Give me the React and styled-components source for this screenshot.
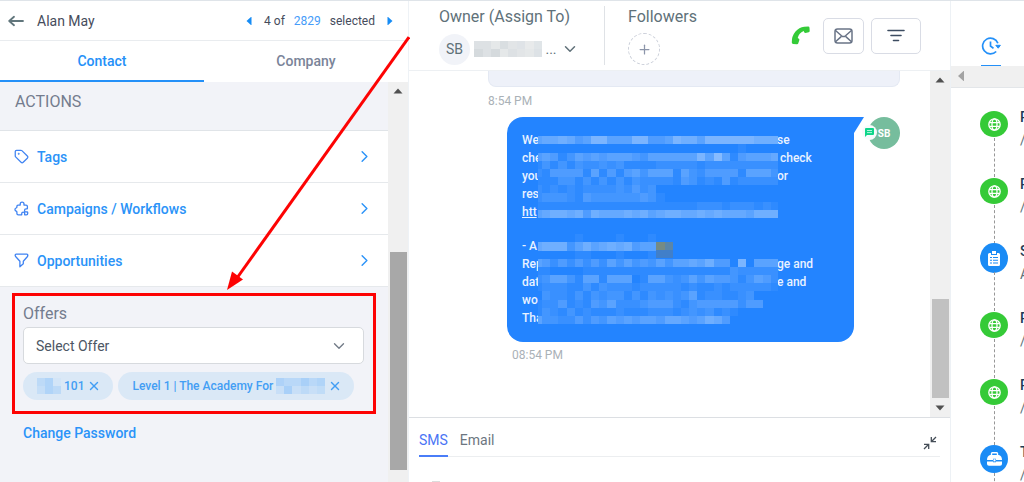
import React, { useState } from "react";
import styled, { createGlobalStyle } from "styled-components";
import { ChevronDown, ChevronRight, Plus, Tag, X } from "lucide-react";

const GlobalStyle = createGlobalStyle`
  * {
    box-sizing: border-box;
  }

  body {
    margin: 0;
    background: #fff;
    font-family: Roboto, "Liberation Sans", sans-serif;
    font-size: 14px;
    color: #607179;
  }

  button, select, input {
    font: inherit;
    color: inherit;
  }

  button {
    padding: 0;
    border: 0;
    background: none;
    cursor: pointer;
  }

  a {
    text-decoration: none;
  }

  svg {
    display: block;
    flex: none;
  }
`;

const Page = styled.div`
  display: grid;
  grid-template-columns: 409px minmax(0, 1fr) 74px;
  height: 100vh;
  overflow: hidden;
  border-top: 1px solid #dfe4e9;
`;

const Sidebar = styled.aside`
  position: relative;
  z-index: 1;
  display: flex;
  flex-direction: column;
  min-height: 0;
  border-right: 1px solid #eef2f6;
`;

const RecordBar = styled.header`
  display: flex;
  align-items: center;
  flex: none;
  height: 40px;
  padding: 0 13px 0 8px;
  border-bottom: 1px solid #e9ecef;
  color: #464c5c;
`;

const RecordName = styled.span`
  flex: 1;
  padding-left: 13px;
`;

const Pager = styled.div`
  display: flex;
  align-items: center;
  font-size: 12px;

  a {
    margin: 0 9px;
    color: #469cf9;
  }

  span:first-of-type {
    margin-left: 10px;
  }

  button:last-child {
    margin-left: 10px;
  }
`;

const TabBar = styled.nav`
  display: flex;
  flex: none;
  height: 41px;
`;

const TabButton = styled.button`
  flex: 1;
  font-weight: 500;
  color: ${(p) => (p.$active ? "#2490f8" : "#7a8499")};
  border-bottom: 2px solid ${(p) => (p.$active ? "#2490f8" : "#fff")};
`;

const SidebarBody = styled.div`
  display: flex;
  flex: 1;
  min-height: 0;
`;

const SidebarContent = styled.div`
  flex: 1;
  background: #f2f3f8;
  overflow: hidden;
`;

const SectionTitle = styled.h2`
  height: 49px;
  margin: 0;
  padding: 10px 15px;
  border-bottom: 1px solid #e0e4e8;
  font-size: 16px;
  font-weight: 400;
  line-height: 20px;
  color: #747c8e;
`;

const ActionRow = styled.button`
  display: flex;
  align-items: center;
  gap: 8px;
  width: 100%;
  height: 52px;
  padding: 0 14px;
  background: #fff;
  border-bottom: 1px solid #e6e9ec;
  font-weight: 500;
  text-align: left;
  color: #2b93f8;

  span {
    flex: 1;
  }
`;

const OfferBox = styled.section`
  margin: 6px 12px 0;
  padding: 7px 9px 11px 8px;
  border: 3px solid #fd0303;
`;

const OfferLabel = styled.label`
  display: block;
  height: 24px;
  font-size: 16px;
  line-height: 22px;
  color: #747c8e;
`;

const SelectWrap = styled.div`
  display: grid;
  align-items: center;

  select,
  svg {
    grid-area: 1 / 1;
  }

  svg {
    justify-self: end;
    margin-right: 16px;
    pointer-events: none;
  }
`;

const OfferSelect = styled.select`
  appearance: none;
  width: 100%;
  height: 37px;
  padding: 0 12px;
  border: 1px solid #d7dade;
  border-radius: 5px;
  background: #fff;
  color: #4c5664;
`;

const Chips = styled.div`
  display: flex;
  gap: 5px;
  margin-top: 8px;
`;

const Chip = styled.div`
  display: flex;
  align-items: center;
  gap: 3px;
  height: 28px;
  padding: 0 12px 0 14px;
  border-radius: 14px;
  background: #dae8f6;
  font-size: 12px;
  font-weight: 500;
  color: #439ef4;
`;

const PasswordLink = styled.a`
  display: inline-block;
  margin: 11px 23px;
  font-weight: 500;
  color: #2b93f8;
`;

const ScrollTrack = styled.div`
  display: flex;
  flex-direction: column;
  align-items: center;
  justify-content: space-between;
  flex: none;
  width: 20px;
  padding: 5px 0 ${(p) => p.$bottom}px;
  background: #f0f0f0;
`;

const ScrollThumb = styled.div`
  width: 17px;
  height: ${(p) => p.$size}px;
  margin-top: auto;
  margin-bottom: ${(p) => p.$gap || 0}px;
  background: ${(p) => p.$color};
`;

const ArrowOverlay = styled.svg`
  position: absolute;
  top: 0;
  left: 0;
  pointer-events: none;
`;

const Conversation = styled.main`
  display: flex;
  flex-direction: column;
  min-width: 0;
  min-height: 0;
`;

const ConversationBar = styled.header`
  display: flex;
  flex: none;
  height: 70px;
  padding: 5px 29px 5px 30px;
  border-bottom: 1px solid #edf0f3;
`;

const Owner = styled.div`
  width: 166px;
  border-right: 1px solid #dfe2e6;
`;

const Followers = styled.div`
  flex: 1;
  padding-left: 23px;
`;

const FieldTitle = styled.div`
  height: 22px;
  font-size: 16px;
  line-height: 22px;
  white-space: nowrap;
`;

const OwnerPicker = styled.button`
  display: flex;
  align-items: center;
  height: 32px;
  margin-top: 5px;

  svg:last-child {
    margin-left: 4px;
  }
`;

const Initials = styled.span`
  display: grid;
  place-items: center;
  width: 31px;
  height: 31px;
  margin-right: 4px;
  border-radius: 50%;
  background: #f1f3f8;
`;

const AddFollower = styled.button`
  display: grid;
  place-items: center;
  width: 32px;
  height: 32px;
  margin-top: 5px;
  border: 1px dashed #ccd0da;
  border-radius: 50%;
  color: #8c95aa;
`;

const Toolbar = styled.div`
  display: flex;
  align-items: center;
  gap: 7px;
`;

const CallButton = styled.button`
  margin-right: 6px;
`;

const ToolButton = styled.button`
  display: grid;
  place-items: center;
  width: ${(p) => p.$width}px;
  height: 36px;
  border: 1px solid #d9dce5;
  border-radius: 5px;
  background: #fff;
`;

const ThreadArea = styled.div`
  display: flex;
  flex: 1;
  min-height: 0;
`;

const Thread = styled.div`
  flex: 1;
  padding: 0 30px 0 79px;
  overflow: hidden;
`;

const EarlierBubble = styled.div`
  height: 16px;
  margin-bottom: 6px;
  border: 1px solid #e4e9f3;
  border-top: 0;
  border-radius: 0 0 8px 8px;
  background: #eef1f9;
`;

const Stamp = styled.div`
  padding-left: ${(p) => p.$indent || 0}px;
  font-size: 12px;
  line-height: 16px;
  color: #aab1b7;
`;

const MessageRow = styled.div`
  display: flex;
  justify-content: flex-end;
  margin: 8px 0 5px;
`;

const Bubble = styled.div`
  position: relative;
  flex: none;
  width: 347px;
  height: 225px;
  padding: 14px 15px;
  border-radius: 16px 0 16px 16px;
  background: #2384ff;
  color: #e9f2ff;
  font-size: 12px;
  font-weight: 500;
`;

const BubbleTail = styled.svg`
  margin-right: 4px;
`;

const Paragraph = styled.p`
  margin: 0 0 16px;
`;

const Line = styled.span`
  display: flex;
  height: 18px;
  line-height: 18px;
  white-space: pre;
`;

const LineStart = styled.span`
  width: 15px;
  margin-right: 240px;
  text-decoration: ${(p) => (p.$link ? "underline" : "none")};
`;

const TextMask = styled.svg`
  position: absolute;
  top: 11px;
  left: 31px;
`;

const Sender = styled.div`
  position: relative;
  display: grid;
  place-items: center;
  width: 32px;
  height: 32px;
  border-radius: 50%;
  background: #76bd9d;
  color: #fff;
  font-size: 10px;
  font-weight: 700;
`;

const SenderBadge = styled.span`
  position: absolute;
  top: 8px;
  left: -6px;
  display: grid;
  place-items: center;
  width: 15px;
  height: 15px;
  border-radius: 50%;
  background: #f8fafc;
`;

const Composer = styled.footer`
  flex: none;
  height: 65px;
  padding: 5px 10px 0;
  border-top: 1px solid #dcdfe3;
  overflow: hidden;
`;

const ComposerTabs = styled.div`
  display: flex;
  align-items: flex-start;
  gap: 12px;
  height: 34px;
  border-bottom: 1px solid #eceef0;

  svg {
    margin: 13px 3px 0 auto;
  }
`;

const ComposerTab = styled.button`
  height: 34px;
  padding-top: 2px;
  border-bottom: 2px solid ${(p) => (p.$active ? "#4a7df8" : "transparent")};
  color: ${(p) => (p.$active ? "#4a74f5" : "#6c7680")};
`;

const ComposerField = styled.div`
  width: 8px;
  height: 8px;
  margin: 24px 13px 0;
  background: #dcdcdc;
`;

const Activity = styled.aside`
  display: flex;
  flex-direction: column;
  min-height: 0;
  border-left: 1px solid #edf1f5;
  overflow: hidden;
`;

const ActivityTabs = styled.div`
  display: flex;
  align-items: flex-end;
  flex: none;
  height: 65px;
  padding-left: 30px;
`;

const ActivityTab = styled.button`
  width: 20px;
  height: 30px;
  padding-bottom: 10px;
  border-bottom: 1px solid #2490f8;
`;

const HorizontalTrack = styled.div`
  flex: none;
  height: 22px;
  padding: 5px 4px;
  background: #f0f0f0;
  border-bottom: 1px solid #e3e6e9;
`;

const Timeline = styled.ol`
  flex: 1;
  margin: 0;
  padding: 22px 0 0 29px;
  list-style: none;
`;

const Event = styled.li`
  display: grid;
  grid-template-columns: 28px 40px;
  column-gap: 12px;
  height: 67px;
`;

const EventRail = styled.div`
  display: flex;
  flex-direction: column;
  align-items: center;

  &::after {
    content: "";
    flex: 1;
    border-left: 1px dashed #979797;
  }
`;

const EventDot = styled.span`
  display: grid;
  place-items: center;
  width: 28px;
  height: ${(p) => p.$height}px;
  margin: ${(p) => (28 - p.$height) / 2}px 0;
  border-radius: 50%;
  background: ${(p) => p.$color};
`;

const EventText = styled.div`
  line-height: 14px;
  white-space: nowrap;

  strong {
    display: block;
    margin-bottom: 9px;
    font-weight: 500;
    color: #1d3c58;
  }
`;

// One digit per cell: how strongly the cell is lightened.
const maskRows = [
  "000000000000000000000000000000",
  "566764588555884458775888888777",
  "000000000000000000000000010000",
  "454135454555435555558595145556",
  "131313223231111222221222222222",
  "214444151414535551532444415553",
  "111331313131322221431214122222",
  "212121222232423000000000000000",
  "233321433333343100000000000000",
  "111111111111111111112221222121",
  "567767476667675677667676665777",
  "000000000000000000000000000000",
  "000000000000000000000000000000",
  "000001000010001000000000000000",
  "677735756767455000000000000000",
  "000001100010001000000000000000",
  "542424242535343535565744080555",
  "110000111111111111111111322222",
  "235531551555015532353544313542",
  "122211313222122222121121222221",
  "032213132331313232351221123000",
  "122412143522234442134444424400",
  "132131211121112221232312100000",
  "533224243545455466545764000000",
];

const maskCell = 196 / 24;

const PixelMask = () => (
  <TextMask width="240" height="196" shapeRendering="crispEdges">
    <rect width="241" height="196" fill="#2384ff" />
    {maskRows.map((row, y) =>
      row.split("").map((level, x) => (
        <rect
          key={`${x}-${y}`}
          x={x === 0 ? 0 : 4 + (x - 1) * maskCell}
          y={y * maskCell}
          width={x === 0 ? 4 : maskCell}
          height={maskCell}
          fill="#fff"
          opacity={level * 0.05}
        />
      ))
    )}
    <rect x="118" y="114" width="9" height="8" fill="#758b85" />
    <rect x="127" y="114" width="8" height="8" fill="#5b86a8" />
    <rect x="118" y="122" width="17" height="8" fill="#417fc9" />
  </TextMask>
);

const Blocks = ({ colors, width }) => (
  <svg width={width} height="16" shapeRendering="crispEdges">
    {colors.map((row, y) =>
      row.map((color, x) => (
        <rect
          key={`${x}-${y}`}
          x={(x * width) / row.length}
          y={y * 8}
          width={width / row.length}
          height="8"
          fill={color}
        />
      ))
    )}
  </svg>
);

const Triangle = ({ direction, color = "#505050", size = 8 }) => {
  const angle = { up: 0, right: 90, down: 180, left: 270 }[direction];
  return (
    <svg width={size + 2} height={size} viewBox="0 0 10 8">
      <path d="M.5 6.500 5 1.500 9.500 6.500Z" fill={color} transform={`rotate(${angle} 5 4)`} />
    </svg>
  );
};

const PuzzleIcon = () => (
  <svg width="15" height="15" viewBox="0 0 15 15" fill="none" stroke="#3f83f2" strokeWidth="1.3" strokeLinejoin="round">
    <path d="M4 4.2h1.700c.8 0 .5-.6.5-1.200a1.900 1.900 0 0 1 3.800 0c0 .6-.3 1.200.5 1.200h1.600q1.300 0 1.300 1.300v1.800c0 .8-.7.500-1.300.5a1.500 1.500 0 0 0 0 3.200c.6 0 1.600-.4 1.600.5v1q0 1.400-1.300 1.400h-1.200c-.8 0-.5-.6-.5-1.200a1.500 1.500 0 0 0-3 0c0 .6.3 1.200-.5 1.200H4.300q-1.400 0-1.400-1.400v-1.300c0-.8-.2-.8-.8-1a1.700 1.700 0 0 1 0-3.200c.6-.2.800-.2.800-1V5.300Q2.900 4.200 4 4.200Z" />
  </svg>
);

const FunnelIcon = () => (
  <svg width="15" height="15" viewBox="0 0 15 15" fill="none" stroke="#3f83f2" strokeWidth="1.3" strokeLinejoin="round">
    <path d="M2.2 1.2h10.600q1.200 0 1 1.300l-.3 1-4.200 4.800v2.500l-3.400 3V8.300L1.600 3.500 1.200 2.500Q1 1.200 2.200 1.200Z" />
  </svg>
);

const BackIcon = () => (
  <svg width="16" height="12" viewBox="0 0 16 12" fill="none" stroke="#61767c" strokeWidth="1.8" strokeLinecap="round" strokeLinejoin="round">
    <path d="M15 6H1.500M6 1.800 1.200 6 6 10.200" />
  </svg>
);

const PhoneIcon = () => (
  <svg width="19" height="19" viewBox="0 0 19 19">
    <path
      d="M13.2.8 17.2.5q1.200 0 1.300 1.200l.2 3.300q0 1-1 1.200l-3.200.8q-1 0-1.300-.8l-.5-1.200Q7.800 7.200 6.700 12l1.200.8q.7.500.4 1.400l-1.100 3.300q-.4 1-1.400.8l-3.700-.4q-1.200-.2-1.300-1.400Q.5 10.300 4.500 5.500 8 1.500 13.200.8Z"
      fill="#34cb38"
    />
  </svg>
);

const MailIcon = () => (
  <svg width="19" height="16" viewBox="0 0 19 16" fill="none" stroke="#697487" strokeWidth="1.5" strokeLinejoin="round">
    <rect x="1" y="1" width="17" height="14" rx="2.5" />
    <path d="m1.500 2.500 6 5.300q2 1.600 4 0l6-5.300M1.500 13.800l5.700-5.200M17.500 13.800l-5.700-5.200" />
  </svg>
);

const FilterLinesIcon = () => (
  <svg width="18" height="13" viewBox="0 0 18 13" stroke="#3c4c61" strokeWidth="1.6" strokeLinecap="round">
    <path d="M1 1.500h16M4 6.500h10M6.500 11.500h5" />
  </svg>
);

const HistoryIcon = () => (
  <svg width="20" height="18" viewBox="0 0 20 18" fill="none" stroke="#2490f8" strokeWidth="1.7">
    <path d="M16.900 6.200A7.900 7.900 0 1 0 15.200 14.500M9.500 4.500V9l3 2.400" />
    <path d="M14.800 8.300h4.600L17.200 11.200Z" fill="#2490f8" strokeLinejoin="round" strokeWidth="1" />
  </svg>
);

const MessageIcon = () => (
  <svg width="9" height="9" viewBox="0 0 9 9">
    <path d="M1 0h7q1 0 1 1v5q0 1-1 1H2L0 9V1q0-1 1-1Z" fill="#0fd58a" />
    <path d="M2 2.500h5M2 4.600h5" stroke="#d8fff0" strokeWidth=".8" />
  </svg>
);

const CollapseIcon = () => (
  <svg width="14" height="14" viewBox="0 0 14 14" fill="none" stroke="#454e58" strokeWidth="1.3">
    <path d="M8.300 1v4.700H13M8.300 5.700 13 1M1 8.300h4.700V13M5.700 8.300 1 13" />
  </svg>
);

const GlobeIcon = () => (
  <svg width="13" height="13" viewBox="0 0 13 13" fill="none" stroke="#fff" strokeWidth="1.3">
    <circle cx="6.5" cy="6.5" r="5.7" />
    <ellipse cx="6.5" cy="6.5" rx="2.5" ry="5.7" />
    <path d="M1.200 4.600h10.600M1.200 8.400h10.600" />
  </svg>
);

const ClipboardIcon = () => (
  <svg width="12" height="15" viewBox="0 0 12 15">
    <path d="M1.500 2H3v2h6V2h1.500Q12 2 12 3.500v10q0 1.500-1.500 1.500h-9Q0 15 0 13.500v-10Q0 2 1.500 2Z" fill="#fff" />
    <path d="M4 0h4v3H4Z" fill="#fff" />
    <path d="M2 6.500h2M5 6.500h5M2 9.200h2M5 9.200h5M2 12h2M5 12h5" stroke="#1a8bf5" strokeWidth="1.1" />
  </svg>
);

const BriefcaseIcon = () => (
  <svg width="15" height="14" viewBox="0 0 15 14">
    <path d="M4.500 3V1.500Q4.500.7 5.300.7h4.400q.8 0 .8.8V3" fill="none" stroke="#fff" strokeWidth="1.4" />
    <path d="M3 3h9q3 1 3 5H9V6.700H6V8H0Q0 4 3 3ZM0 9.500h6v.8h3v-.8h6V12q0 1.800-2 1.800H2Q0 13.800 0 12Z" fill="#fff" />
    <path d="M6.500 7.200h2v2.200h-2Z" fill="#fff" />
  </svg>
);

const actions = [
  { label: "Tags", icon: <Tag size={15} strokeWidth={2} color="#3f83f2" /> },
  { label: "Campaigns / Workflows", icon: <PuzzleIcon /> },
  { label: "Opportunities", icon: <FunnelIcon /> },
];

const intro = [["We", "se"], ["che", " check"], ["you", "or"], ["res", ""], ["htt", "", true]];
const closing = [["- A", ""], ["Rep", "ge and"], ["dat", "e and"], ["wo", ""], ["Tha", ""]];

const green = "#35ca37";
const blue = "#1a8bf5";

const events = [
  { title: "P", detail: "/", color: green, height: 26, icon: <GlobeIcon /> },
  { title: "P", detail: "/", color: green, height: 26, icon: <GlobeIcon /> },
  { title: "S", detail: "A", color: blue, height: 30, icon: <ClipboardIcon /> },
  { title: "P", detail: "/", color: green, height: 26, icon: <GlobeIcon /> },
  { title: "P", detail: "/", color: green, height: 26, icon: <GlobeIcon /> },
  { title: "T", detail: "/", color: blue, height: 28, icon: <BriefcaseIcon /> },
];

const MessageLines = ({ lines }) => (
  <Paragraph>
    {lines.map(([start, end, link]) => (
      <Line key={start}>
        <LineStart $link={link}>{start}</LineStart>
        {end}
      </Line>
    ))}
  </Paragraph>
);

const App = () => {
  const [tab, setTab] = useState("Contact");
  const [channel, setChannel] = useState("SMS");

  return (
    <Page>
      <GlobalStyle />
      <Sidebar>
        <RecordBar>
          <button aria-label="Back">
            <BackIcon />
          </button>
          <RecordName>Alan May</RecordName>
          <Pager>
            <button aria-label="Previous">
              <Triangle direction="left" color="#168cf5" />
            </button>
            <span>4 of</span>
            <a href="#selected">2829</a>
            <span>selected</span>
            <button aria-label="Next">
              <Triangle direction="right" color="#168cf5" />
            </button>
          </Pager>
        </RecordBar>
        <TabBar>
          {["Contact", "Company"].map((name) => (
            <TabButton key={name} $active={tab === name} onClick={() => setTab(name)}>
              {name}
            </TabButton>
          ))}
        </TabBar>
        <SidebarBody>
          <SidebarContent>
            <SectionTitle>ACTIONS</SectionTitle>
            {actions.map(({ label, icon }) => (
              <ActionRow key={label}>
                {icon}
                <span>{label}</span>
                <ChevronRight size={19} strokeWidth={1.8} />
              </ActionRow>
            ))}
            <OfferBox>
              <OfferLabel htmlFor="offer">Offers</OfferLabel>
              <SelectWrap>
                <OfferSelect id="offer">
                  <option>Select Offer</option>
                </OfferSelect>
                <ChevronDown size={18} strokeWidth={1.8} color="#727b87" />
              </SelectWrap>
              <Chips>
                <Chip>
                  <Blocks
                    width={24}
                    colors={[
                      ["#bddaf7", "#b0d4f8", "#d3e5f7"],
                      ["#c5def7", "#b0d4f8", "#bddaf7"],
                    ]}
                  />
                  <span>101</span>
                  <button aria-label="Remove 101">
                    <X size={14} strokeWidth={2.4} />
                  </button>
                </Chip>
                <Chip>
                  <span>Level 1 | The Academy For</span>
                  <Blocks
                    width={49}
                    colors={[
                      ["#aed2f8", "#b9d8f8", "#b9d8f8", "#a9d0f8", "#b9d8f8", "#b0d4f8"],
                      ["#c8dff7", "#a9d0f8", "#c8dff7", "#bddaf7", "#c8dff7", "#c0dcf7"],
                    ]}
                  />
                  <button aria-label="Remove Level 1">
                    <X size={14} strokeWidth={2.4} />
                  </button>
                </Chip>
              </Chips>
            </OfferBox>
            <PasswordLink href="#password">Change Password</PasswordLink>
          </SidebarContent>
          <ScrollTrack $bottom={12}>
            <Triangle direction="up" />
            <ScrollThumb $size={218} $color="#a8a8a8" />
          </ScrollTrack>
        </SidebarBody>
        <ArrowOverlay width="410" height="300">
          <path d="M409 36 237 277" stroke="#fd0303" strokeWidth="3" />
          <path d="M227 289 232 270.500 243 278.500Z" fill="#fd0303" />
        </ArrowOverlay>
      </Sidebar>

      <Conversation>
        <ConversationBar>
          <Owner>
            <FieldTitle>Owner (Assign To)</FieldTitle>
            <OwnerPicker>
              <Initials>SB</Initials>
              <Blocks
                width={68}
                colors={[
                  ["#dde1e4", "#dde1e4", "#e5e8e9", "#d9dee1", "#e2e5e7", "#dfe3e7", "#e8eaeb", "#e0e5e8"],
                  ["#d5dadd", "#dde1e4", "#d5dadd", "#e5e8e9", "#dde1e4", "#e2e5e7", "#e5e8e9", "#dde2e6"],
                ]}
              />
              &nbsp;...
              <ChevronDown size={18} />
            </OwnerPicker>
          </Owner>
          <Followers>
            <FieldTitle>Followers</FieldTitle>
            <AddFollower aria-label="Add follower">
              <Plus size={15} />
            </AddFollower>
          </Followers>
          <Toolbar>
            <CallButton aria-label="Call">
              <PhoneIcon />
            </CallButton>
            <ToolButton $width={41} aria-label="Mail">
              <MailIcon />
            </ToolButton>
            <ToolButton $width={50} aria-label="Filter">
              <FilterLinesIcon />
            </ToolButton>
          </Toolbar>
        </ConversationBar>

        <ThreadArea>
          <Thread>
            <EarlierBubble />
            <Stamp>8:54 PM</Stamp>
            <MessageRow>
              <Bubble>
                <MessageLines lines={intro} />
                <MessageLines lines={closing} />
                <PixelMask />
              </Bubble>
              <BubbleTail width="10" height="16">
                <path d="M0 0h10L0 16Z" fill="#2384ff" />
              </BubbleTail>
              <Sender>
                SB
                <SenderBadge>
                  <MessageIcon />
                </SenderBadge>
              </Sender>
            </MessageRow>
            <Stamp $indent={24}>08:54 PM</Stamp>
          </Thread>
          <ScrollTrack $bottom={5}>
            <Triangle direction="up" />
            <ScrollThumb $size={99} $gap={6} $color="#c1c1c1" />
            <Triangle direction="down" />
          </ScrollTrack>
        </ThreadArea>

        <Composer>
          <ComposerTabs>
            {["SMS", "Email"].map((name) => (
              <ComposerTab key={name} $active={channel === name} onClick={() => setChannel(name)}>
                {name}
              </ComposerTab>
            ))}
            <CollapseIcon />
          </ComposerTabs>
          <ComposerField />
        </Composer>
      </Conversation>

      <Activity>
        <ActivityTabs>
          <ActivityTab aria-label="Activity">
            <HistoryIcon />
          </ActivityTab>
        </ActivityTabs>
        <HorizontalTrack>
          <Triangle direction="left" color="#a3a3a3" size={10} />
        </HorizontalTrack>
        <Timeline>
          {events.map(({ title, detail, color, height, icon }, index) => (
            <Event key={index}>
              <EventRail>
                <EventDot $color={color} $height={height}>
                  {icon}
                </EventDot>
              </EventRail>
              <EventText>
                <strong>{title}</strong>
                {detail}
              </EventText>
            </Event>
          ))}
        </Timeline>
      </Activity>
    </Page>
  );
};

export default App;
